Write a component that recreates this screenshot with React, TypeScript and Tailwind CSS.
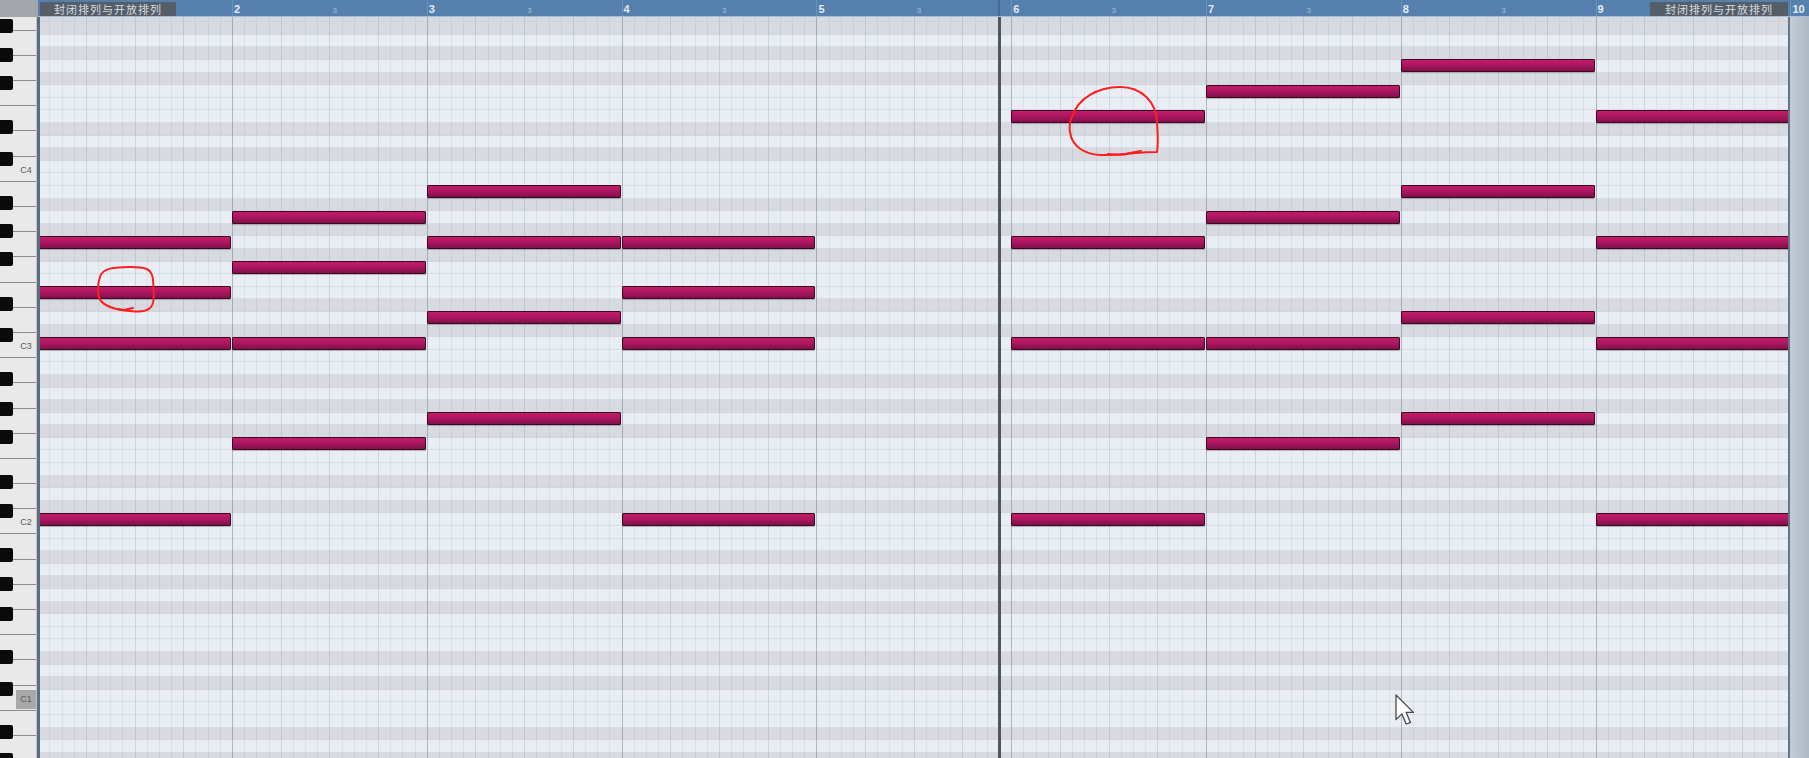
import React from "react";

const chords: number[][] = [
  [-7, 0, 2, 4],
  [-4, 0, 3, 5],
  [-3, 1, 4, 6],
  [-7, 0, 2, 4],
  [],
  [-7, 0, 4, 9],
  [-4, 0, 5, 10],
  [-3, 1, 6, 11],
  [-7, 0, 4, 9],
];

const blackKeyTops = [
  19, 48, 76, 120, 152, 196, 224, 252, 297, 328, 372, 402, 430, 475, 504, 548,
  577, 607, 650, 682, 725, 753,
];

const DARK = [1, 3, 7, 9, 11];

function Locator({ pos }: { pos: "left" | "right" }) {
  return (
    <div
      className={`absolute top-[2px] h-[14px] ${
        pos === "left" ? "left-[2px] w-[136px]" : "left-[1612px] w-[138px]"
      } bg-[#555e68] text-[#d6dbe0] text-[11px] leading-[14px] flex items-center justify-center tracking-[1px] font-['Noto_Sans_CJK_SC',sans-serif] whitespace-nowrap`}
    >
      封闭排列与开放排列
    </div>
  );
}

function Ruler() {
  const bars = Array.from({ length: 10 }, (_, i) => i + 1);
  return (
    <div className="relative flex-1 h-full bg-[#5580ad] overflow-hidden border-b border-[#a9bdd2]">
      <div className="flex h-full ml-[-0.8px]">
        {bars.map((n) => (
          <div
            key={n}
            className={`flex shrink-0 h-full border-l border-[#6d92ba] ${
              n === 10 ? "w-[19px]" : "w-[194.8px]"
            }`}
          >
            <div className="w-[97.4px] shrink-0 pl-[1px] pt-[3px] text-[11px] leading-[12px] font-bold text-[#e3ebf4]">
              {n === 1 ? "" : n}
            </div>
            {n !== 1 && n !== 9 && n !== 10 && (
              <div className="w-[97.4px] shrink-0 pl-[2px] pt-[6px] text-[8px] leading-[9px] text-[#a9c0d9]">
                3
              </div>
            )}
          </div>
        ))}
      </div>
      <div className="absolute top-0 bottom-0 left-[960px] w-[2px] bg-[#48698c]" />
      <Locator pos="left" />
      <Locator pos="right" />
    </div>
  );
}

function Keyboard() {
  const keys = Array.from({ length: 30 }, (_, j) => j);
  const labels: Record<number, string> = { 6: "C4", 13: "C3", 20: "C2", 27: "C1" };
  return (
    <div className="relative w-[37px] h-full shrink-0 overflow-hidden bg-[#e9e9e9] border-r border-[#c2c2c2] flex flex-col">
      {keys.map((j) => (
        <div
          key={j}
          className={`${
            j === 0 ? "h-[13.7px]" : "h-[25.2px]"
          } shrink-0 border-b border-[#8c8c8c] flex items-end justify-end`}
        >
          {labels[j] && (
            <div
              className={`w-[20px] h-[19px] mb-[1px] flex items-center justify-center text-[9px] text-[#5a5a5a] font-['Liberation_Sans',sans-serif] ${
                j === 27 ? "bg-[#a8a8a8]" : ""
              }`}
            >
              {labels[j]}
            </div>
          )}
        </div>
      ))}
      {blackKeyTops.map((t) => (
        <div
          key={t}
          className="absolute left-0 w-[13px] h-[14px] bg-[#0a0a0a] rounded-r-[2px]"
          style={{ top: t - 17 }}
        />
      ))}
    </div>
  );
}

function Grid() {
  const rows: { r: number; first: boolean }[] = [{ r: 26, first: true }];
  for (let r = 25; r >= -34; r--) rows.push({ r, first: false });
  return (
    <div className="relative w-[1748px] h-full shrink-0 overflow-hidden bg-[#e9eef5]">
      <div className="flex flex-col">
        {rows.map(({ r, first }) => {
          const m = ((r % 14) + 14) % 14;
          const dark = first || DARK.includes(m);
          return (
            <div
              key={r}
              className={`${first ? "h-[5.3px]" : "h-[12.6px]"} shrink-0 border-b ${
                dark ? "bg-[#d7dbe1] border-[#d1d6dd]" : "bg-[#e9eef5] border-[#d6dde6]"
              }`}
            />
          );
        })}
      </div>
      <div className="absolute top-0 bottom-0 left-[-2.8px] flex pointer-events-none">
        {Array.from({ length: 10 }).map((_, b) => (
          <div key={b} className="flex w-[194.8px] shrink-0 h-full">
            {Array.from({ length: 16 }).map((__, k) => (
              <div
                key={k}
                className={`w-[12.175px] shrink-0 h-full border-l ${
                  k === 0
                    ? "border-[rgba(95,108,125,0.42)]"
                    : k % 4 === 0
                    ? "border-[rgba(110,125,150,0.22)]"
                    : "border-[rgba(120,135,160,0.12)]"
                }`}
              />
            ))}
          </div>
        ))}
      </div>
      <div className="absolute top-0 bottom-0 left-[958px] w-[3px] bg-[#50565d]" />
      {chords.map((notes, i) =>
        notes.map((s) => (
          <div
            key={`${i}-${s}`}
            className="absolute h-[13px] rounded-[1px] border border-[#3a0820] bg-linear-to-b from-[#c41c68] via-[#aa1660] to-[#80104a] shadow-[0_1px_1px_rgba(0,0,0,0.25)]"
            style={{ left: -2.8 + i * 194.8, width: 193.8, top: 319.5 - s * 25.2 }}
          />
        ))
      )}
    </div>
  );
}

function Overlay() {
  return (
    <svg
      className="absolute top-0 left-0 pointer-events-none"
      width={1809}
      height={758}
      viewBox="0 0 1809 758"
    >
      <g fill="none" stroke="#ff1e1e" strokeWidth={2} strokeLinecap="round" strokeLinejoin="round">
        <path d="M 100 277 C 102 268, 115 267, 130 267 C 145 267, 152 268, 153 280 C 154 292, 155 304, 150 308 C 146 312, 138 312, 130 311 C 118 310, 106 307, 101 301 C 97 296, 97 285, 100 277 Z" />
        <path d="M 118 309 Q 124 311 128 309 L 133 308" />
        <path d="M 1072 117 C 1078 98, 1098 87, 1120 87 C 1142 87, 1156 102, 1157 122 C 1158 136, 1158 146, 1157 152 C 1140 152, 1120 155, 1100 155 C 1085 154, 1072 147, 1070 132 C 1069 126, 1070 121, 1072 117 Z" />
        <path d="M 1108 154 Q 1122 156 1130 153 L 1141 151" />
      </g>
      <g transform="translate(1396 695) scale(1.45)">
        <path
          d="M0 0 L0 17 L4 13 L7 20 L10 19 L7 12 L12 12 Z"
          fill="#ffffff"
          stroke="#4a4a4a"
          strokeWidth={0.9}
          strokeLinejoin="round"
        />
      </g>
    </svg>
  );
}

export default function App() {
  return (
    <div className="relative w-[1809px] h-[758px] overflow-hidden flex flex-col bg-[#b3bfcb] font-['Liberation_Sans',sans-serif]">
      <div className="flex h-[17px] shrink-0">
        <div className="w-[38px] shrink-0 h-full bg-[#a3a7ab]" />
        <Ruler />
      </div>
      <div className="flex flex-1 min-h-0">
        <Keyboard />
        <div className="w-[3px] shrink-0 h-full bg-[#5e6c80]" />
        <Grid />
        <div className="w-[2px] shrink-0 h-full bg-[#66748a]" />
        <div className="flex-1 h-full bg-linear-to-r from-[#c3ccd6] to-[#aebac6]" />
      </div>
      <Overlay />
    </div>
  );
}
